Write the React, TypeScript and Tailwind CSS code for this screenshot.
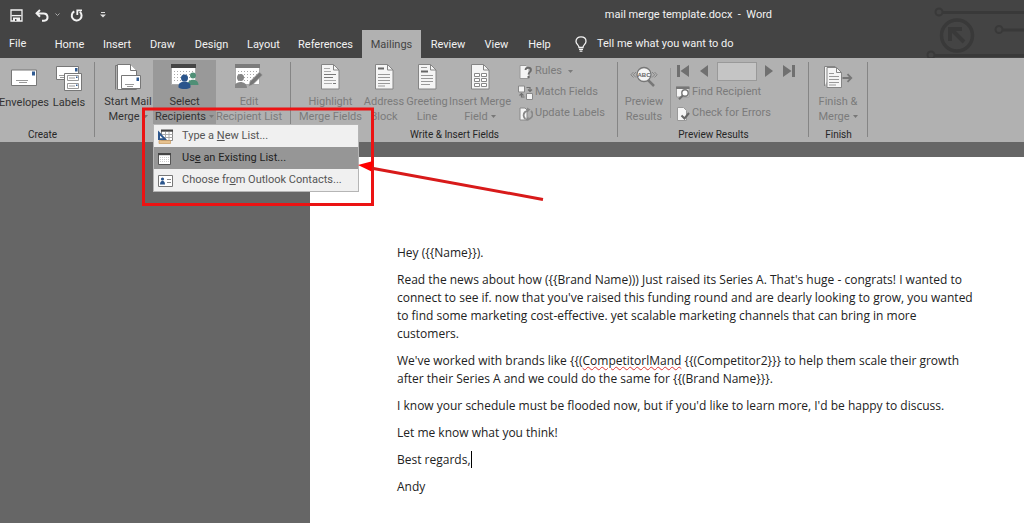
import React from 'react';

type IconProps = { className?: string };

const SaveIcon = () => (
  <svg width="13" height="13" viewBox="0 0 13 13" fill="none" stroke="#f2f2f2" strokeWidth="1.3">
    <path d="M1 1h11v11H1z" />
    <path d="M1.5 6.6h10" />
    <path d="M3 8.5h7V12H3z" fill="#f2f2f2" stroke="none" />
    <path d="M5 10h1.4v2H5z" fill="#444" stroke="none" />
  </svg>
);

const UndoIcon = () => (
  <svg width="14" height="13" viewBox="0 0 14 13" fill="none" stroke="#f2f2f2" strokeWidth="2">
    <path d="M5 1L1.6 4.3 5 7.8" />
    <path d="M2 4.4h6.5c5 0 5.500 6.800.6 7.400H7" />
  </svg>
);

const RedoIcon = () => (
  <svg width="13" height="13" viewBox="0 0 13 13" fill="none" stroke="#f2f2f2" strokeWidth="2">
    <path d="M4.300 2.300a4.900 4.900 0 1 0 5.500.5" />
    <path d="M7.300 6V1.300H12" strokeWidth="1.800" />
  </svg>
);

const Caret = ({ className = '' }: IconProps) => (
  <svg className={className} width="5" height="3" viewBox="0 0 5 3" fill="currentColor">
    <path d="M0 0h5L2.500 3z" />
  </svg>
);

const EnvelopeIcon = () => (
  <svg width="26" height="18" viewBox="0 0 26 18">
    <path d="M.5 1h25v15.500H.5z" fill="#fff" stroke="#777" />
    <path d="M21 2.500h3v4h-3z" fill="#2f5a92" />
    <path d="M5 11.500h12M8 13.500h8" stroke="#999" />
  </svg>
);

const LabelsIcon = () => (
  <svg width="26" height="26" viewBox="0 0 26 26">
    <path d="M.5 1.500h22v13H.5z" fill="#fff" stroke="#777" />
    <path d="M19 3h2.500v3.500H19z" fill="#2f5a92" />
    <path d="M3 10.500h6M4 12.500h4" stroke="#999" />
    <path d="M8.500 8.500h17v17h-17z" fill="#fff" stroke="#777" />
    <path d="M11.500 10.500h11v5h-11zM11.500 18.500h11v5h-11z" fill="#fff" stroke="#999" />
    <path d="M13 13h6M13 21h6" stroke="#999" />
    <path d="M20 11.500h1.500V13H20zM20 19.500h1.500V21H20z" fill="#2f5a92" />
  </svg>
);

const MergeIcon = () => (
  <svg width="26" height="27" viewBox="0 0 26 27">
    <path d="M.5 25.500V1.500h4" fill="none" stroke="#777" />
    <path d="M2.500.5h13l6 6v19h-19z" fill="#fff" stroke="#777" />
    <path d="M15.500.5v6h6" fill="#fff" stroke="#777" />
    <path d="M6.500 11.500h19v13h-19z" fill="#fff" stroke="#777" />
    <path d="M21.500 13.500H24V17h-2.500z" fill="#2f5a92" />
    <path d="M10 20.500h9M12 22.500h6" stroke="#999" />
  </svg>
);

const ListGrid = () => (
  <>
    <path d="M.5.5h24v20H.5z" fill="#fff" stroke="#aaa" />
    <path d="M3 7.500h19M3 10.500h19M3 13.500h19M3 16.500h19" stroke="#aaa" strokeDasharray="1 2" />
  </>
);

const RecipientsIcon = () => (
  <svg width="28" height="26" viewBox="0 0 28 26">
    <ListGrid />
    <path d="M0 0h25v4H0z" fill="#454545" />
    <circle cx="22" cy="11.500" r="3" fill="#4f8f76" />
    <path d="M16.500 21c0-7 11-7 11 0z" fill="#4f8f76" />
    <circle cx="13.500" cy="14" r="3.500" fill="#2b558c" />
    <path d="M7.500 22c0-6 12-6 12 0v1.500c-3 2-9 2-12 0z" fill="#2b558c" />
  </svg>
);

const EditListIcon = () => (
  <svg width="28" height="26" viewBox="0 0 28 26">
    <ListGrid />
    <path d="M0 0h25v4H0z" fill="#7c7c7c" />
    <circle cx="5.500" cy="13.500" r="3.500" fill="#858585" />
    <path d="M-1 24c0-8 13-8 13 0z" fill="#858585" />
    <path d="M13.500 22.500l1.500-5L24.500 8l3 3L18 20.500z" fill="#777" stroke="#b1b1b1" strokeWidth=".6" />
  </svg>
);

const HighlightIcon = () => (
  <svg width="19" height="26" viewBox="0 0 19 26">
    <path d="M.5.500h12l5.500 5.500v19H.5z" fill="#f5f5f5" stroke="#858585" />
    <path d="M12.500.500V6H18" fill="none" stroke="#858585" />
    <path d="M3 4.500h6M3 7.500h7M3 16.500h12M3 19.500h8" stroke="#aaa" />
    <path d="M3 10.500h12M3 13.500h9M12 19.500h3" stroke="#777" />
  </svg>
);

const AddressIcon = () => (
  <svg width="19" height="26" viewBox="0 0 19 26">
    <path d="M.5.500h12l5.500 5.500v19H.5z" fill="#f5f5f5" stroke="#858585" />
    <path d="M12.500.500V6H18" fill="none" stroke="#858585" />
    <path d="M3 3.500h6v2H3z" fill="#666" />
    <path d="M3 10.500h12M3 13.500h12M3 16.500h12M3 19.500h12M3 22h7" stroke="#999" />
  </svg>
);

const GreetingIcon = () => (
  <svg width="19" height="26" viewBox="0 0 19 26">
    <path d="M.5.500h12l5.500 5.500v19H.5z" fill="#f5f5f5" stroke="#858585" />
    <path d="M12.500.500V6H18" fill="none" stroke="#858585" />
    <path d="M3 6.500h7v2H3z" fill="#666" />
    <path d="M3 3.500h6M3 11.500h12M3 14.500h12M3 17.500h12M3 20.500h9" stroke="#999" />
  </svg>
);

const InsertFieldIcon = () => (
  <svg width="19" height="26" viewBox="0 0 19 26">
    <path d="M.5.500h12l5.500 5.500v19H.5z" fill="#f5f5f5" stroke="#858585" />
    <path d="M12.500.500V6H18" fill="none" stroke="#858585" />
    <path d="M3.500 9.500h5v3h-5zM10.500 9.500h5v3h-5zM3.500 14.500h5v3h-5zM10.500 14.500h5v3h-5zM3.500 19.500h5v3h-5zM10.500 19.500h5v3h-5z" fill="#fff" stroke="#888" />
  </svg>
);

const RulesIcon = () => (
  <svg width="14" height="14" viewBox="0 0 14 14">
    <path d="M1 .500h6l3 3v10H1z" fill="#f5f5f5" stroke="#999" />
    <path d="M6.500 5c.2-3 5.500-3 5.500 0 0 2.200-2.500 2-2.500 4.500" fill="none" stroke="#6a6a6a" strokeWidth="1.800" />
    <path d="M8.500 11h2v2h-2z" fill="#6a6a6a" />
  </svg>
);

const MatchIcon = () => (
  <svg width="15" height="15" viewBox="0 0 15 15">
    <path d="M.5 1h6v6h-6zM8.500 8.500h6v6h-6z" fill="#f5f5f5" stroke="#888" />
    <path d="M8.500 2.500H12V6M10 4.500l2 2 2-2M6.500 12H3.500V9M1.500 10.500l2-2 2 2" fill="none" stroke="#707070" strokeWidth="1.200" />
  </svg>
);

const UpdateIcon = () => (
  <svg width="14" height="14" viewBox="0 0 14 14">
    <path d="M1 1h5l2 2v10H1z" fill="#f5f5f5" stroke="#888" />
    <path d="M6.500 12a4.600 4.600 0 0 1-.5-7l3-1.500M12 4a4.600 4.600 0 0 1-1 7.500l-3 1.500" fill="none" stroke="#888" strokeWidth="1.800" />
    <path d="M8 .500v5l3.500-3zM9.500 9.500v4L6 13z" fill="#888" />
  </svg>
);

const PreviewIcon = () => (
  <svg width="28" height="22" viewBox="0 0 28 22">
    <path d="M3.500 6L.8 8.800l2.700 2.700M6 6L3.300 8.800 6 11.500M22 6l2.700 2.800L22 11.500M24.500 6l2.700 2.800-2.700 2.700" fill="none" stroke="#858585" />
    <path d="M18 14l6 6" stroke="#777" strokeWidth="2.500" />
    <circle cx="14" cy="8.500" r="7" fill="#f5f5f5" stroke="#777" strokeWidth="1.300" />
    <text x="14" y="11" textAnchor="middle" fontSize="6" fontWeight="700" fill="#666" fontFamily="Liberation Sans">ABC</text>
  </svg>
);

const FindIcon = () => (
  <svg width="14" height="14" viewBox="0 0 14 14">
    <path d="M.5 1h12.500v10H.5z" fill="#f5f5f5" stroke="#999" />
    <path d="M0 .500h13.500v2.500H0z" fill="#777" />
    <circle cx="9" cy="7" r="3.200" fill="#fff" stroke="#777" strokeWidth="1.400" />
    <path d="M6.800 9.500L3 13.300" stroke="#6f6f6f" strokeWidth="2" />
  </svg>
);

const CheckIcon = () => (
  <svg width="14" height="14" viewBox="0 0 14 14">
    <path d="M1.500.500h6l3 3v10h-9z" fill="#f5f5f5" stroke="#999" />
    <path d="M5.500 8.500l3 3L13 6" fill="none" stroke="#666" strokeWidth="2" />
  </svg>
);

const FinishIcon = () => (
  <svg width="29" height="23" viewBox="0 0 29 23">
    <path d="M.5 20V.500h11" fill="#f5f5f5" stroke="#858585" />
    <path d="M3 1.500h9.500l5 5v15H3z" fill="#f5f5f5" stroke="#858585" />
    <path d="M12.500 1.500v5h5" fill="none" stroke="#858585" />
    <path d="M5 7.500h5M5 10.500h10M5 13.500h10M5 16.500h10M5 19h7" stroke="#999" />
    <path d="M18.500 12h8M23.500 8.200l3.800 3.800-3.800 3.800" fill="none" stroke="#777" strokeWidth="1.800" />
  </svg>
);

const NewListIcon = () => (
  <svg width="15" height="15" viewBox="0 0 15 15">
    <path d="M3.500 1.500h11v10h-11z" fill="#fff" stroke="#888" />
    <path d="M3.500 5.500h11M3.500 8.500h11M7.500 3v8M11 3v8" stroke="#aaa" />
    <path d="M3 .500h12v2.200H3z" fill="#444" />
    <path d="M0 1.500V11h9z" fill="#2b558c" />
    <path d="M2 6.500v2.800h2.800z" fill="#fff" />
    <path d="M1 11.500h11.500v3H1z" fill="#e7c28f" stroke="#c99a5e" strokeWidth=".7" />
  </svg>
);

const ExistingListIcon = () => (
  <svg width="13" height="12" viewBox="0 0 13 12">
    <path d="M.5.500h12v11H.5z" fill="#fff" stroke="#555" />
    <path d="M0 0h13v2.200H0z" fill="#444" />
    <path d="M2 4.500h9M2 6.500h9M2 8.500h9" stroke="#ccc" strokeDasharray="1 1" />
  </svg>
);

const ContactIcon = () => (
  <svg width="15" height="12" viewBox="0 0 15 12">
    <path d="M.5.500h14v11H.5z" fill="#fff" stroke="#777" />
    <circle cx="4.500" cy="4" r="1.600" fill="#2b558c" />
    <path d="M2 9.500c0-5 5-5 5 0z" fill="#2b558c" />
    <path d="M9 4.500h4M9 7.500h4" stroke="#888" />
  </svg>
);

const BulbIcon = () => (
  <svg width="12" height="16" viewBox="0 0 12 16" fill="none" stroke="#f2f2f2" strokeWidth="1.300">
    <path d="M4 11.500C4 8.800 1 8.300 1 5.200 1 2.400 3.200.800 6 .800s5 1.600 5 4.400c0 3.100-3 3.600-3 6.300z" />
    <path d="M4 13.300h4M4.600 15.200h2.800" />
  </svg>
);

const CircuitArt = () => (
  <svg className="absolute right-0 top-0" width="120" height="58" viewBox="0 0 120 58" fill="none" stroke="#393939" strokeWidth="2">
    <circle cx="35" cy="12" r="3.500" />
    <path d="M39 12.500h81" strokeWidth="3" />
    <circle cx="95" cy="29.500" r="3.500" />
    <path d="M99 30h21" strokeWidth="3" />
    <circle cx="27" cy="55" r="3.500" />
    <path d="M31 55.500h89" strokeWidth="3" />
    <circle cx="53" cy="35.500" r="15.500" strokeWidth="3.500" />
    <path d="M60 42L48 30M46 41V29h12" strokeWidth="4" />
  </svg>
);

const tabs = [
  ['Home', 'w-[49px]'],
  ['Insert', 'w-[46px]'],
  ['Draw', 'w-[45px]'],
  ['Design', 'w-[53px]'],
  ['Layout', 'w-[51px]'],
  ['References', 'w-[73px]'],
  ['Mailings', 'w-[59px]'],
  ['Review', 'w-[54px]'],
  ['View', 'w-[43px]'],
  ['Help', 'w-[43px]'],
];

type BigProps = {
  icon: React.ReactNode;
  lines: string[];
  width: string;
  disabled?: boolean;
  active?: boolean;
  menu?: boolean;
};

const BigButton = ({ icon, lines, width, disabled, active, menu }: BigProps) => (
  <button
    type="button"
    disabled={disabled}
    className={`flex h-16 shrink-0 flex-col items-center whitespace-nowrap leading-[15px] ${width} ${disabled ? 'text-[#7b7b7b]' : 'text-[#333]'} ${active ? 'bg-[#999]' : ''}`}
  >
    <span className="flex h-[35px] items-center justify-center">{icon}</span>
    {lines.map((line, i) => (
      <span key={line} className="flex h-[15px] items-center gap-[3px]">
        {line}
        {menu && i === lines.length - 1 && <Caret className="text-[#777]" />}
      </span>
    ))}
  </button>
);

const SmallButton = ({ icon, label, menu }: { icon: React.ReactNode; label: string; menu?: boolean }) => (
  <button type="button" disabled className="flex h-[21px] items-center gap-[2px] whitespace-nowrap text-[#7b7b7b]">
    <span className="flex w-[15px] justify-center">{icon}</span>
    {label}
    {menu && <Caret className="ml-1" />}
  </button>
);

const Group = ({ label, width, children }: { label?: string; width: string; children: React.ReactNode }) => (
  <section className={`relative flex h-[84px] shrink-0 flex-col pt-[2px] ${width}`}>
    <div className="flex h-[67px]">{children}</div>
    {label && <h2 className="text-center text-[10px] leading-[15px] text-[#262626]">{label}</h2>}
    <span className="absolute right-0 top-1 h-[75px] w-px bg-[#858585]" />
  </section>
);

const Nav = ({ label, path }: { label: string; path: string }) => (
  <button type="button" disabled aria-label={label}>
    <svg width="13" height="12" viewBox="0 0 13 12" fill="#707070">
      <path d={path} />
    </svg>
  </button>
);

const menuItem = 'flex h-[22px] w-full items-center whitespace-nowrap pt-px text-left';

const letter = {
  greeting: 'Hey ({{Name}}).',
  intro:
    "Read the news about how ({{Brand Name))) Just raised its Series A. That's huge - congrats! I wanted to connect to see if. now that you've raised this funding round and are dearly looking to grow, you wanted to find some marketing cost-effective. yet scalable marketing channels that can bring in more customers.",
  brandsBefore: "We've worked with brands like {{(",
  brandsMisspelt: 'CompetitorlMand',
  brandsAfter:
    ' {{(Competitor2}}} to help them scale their growth after their Series A and we could do the same for {{(Brand Name}}}.',
  closing: "I know your schedule must be flooded now, but if you'd like to learn more, I'd be happy to discuss.",
};

export default function App() {
  return (
    <div className="relative flex min-h-screen flex-col overflow-hidden bg-[#666] font-[Roboto,sans-serif] text-[11px]">
      <header className="relative bg-[#444] text-[#f2f2f2]">
        <CircuitArt />
        <div className="relative flex h-[30px] items-center pl-[10px]">
          <button type="button" aria-label="Save"><SaveIcon /></button>
          <button type="button" aria-label="Undo" className="ml-3"><UndoIcon /></button>
          <button type="button" aria-label="Undo history" className="ml-[6px]">
            <svg width="5" height="4" viewBox="0 0 5 4" fill="none" stroke="#aaa"><path d="M.5.500l2 2 2-2" /></svg>
          </button>
          <button type="button" aria-label="Repeat" className="ml-[10px]"><RedoIcon /></button>
          <button type="button" aria-label="Customize toolbar" className="ml-[17px]">
            <svg width="6" height="6" viewBox="0 0 6 6" fill="#ddd"><path d="M1 0h4v1H1zM0 2.500h6l-3 3z" /></svg>
          </button>
          <h1 className="ml-auto mr-[252px] whitespace-pre">mail merge template.docx  -  Word</h1>
        </div>
        <nav className="relative flex h-7 items-stretch">
          <button type="button" className="w-[45px] pl-[9px] text-left">File</button>
          {tabs.map(([name, width]) => (
            <button
              key={name}
              type="button"
              className={`pt-[2px] ${width} ${name === 'Mailings' ? 'bg-[#b1b1b1] text-[#444]' : ''}`}
            >
              {name}
            </button>
          ))}
          <button type="button" className="ml-[14px] flex items-center gap-[10px]">
            <BulbIcon />
            Tell me what you want to do
          </button>
        </nav>
      </header>

      <div className="flex h-[84px] bg-[#b1b1b1]">
        <Group label="Create" width="w-[95px] pr-[10px]">
          <BigButton icon={<EnvelopeIcon />} lines={['Envelopes']} width="w-12" />
          <BigButton icon={<LabelsIcon />} lines={['Labels']} width="w-[42px]" />
        </Group>
        <Group width="w-[196px]">
          <div className="ml-2 flex">
            <BigButton icon={<MergeIcon />} lines={['Start Mail', 'Merge']} width="w-[50px]" menu />
            <div className="relative">
              <BigButton icon={<RecipientsIcon />} lines={['Select', 'Recipients']} width="w-[63px]" active menu />
              <div className="absolute left-0 top-16 z-10 w-[206px] border border-[#b5b5b5] bg-[#f0f0f0]">
                <button type="button" className={`${menuItem} text-[#555]`}>
                  <span className="flex w-7 pl-1"><NewListIcon /></span>
                  <span>Type a <u>N</u>ew List...</span>
                </button>
                <button type="button" className={`${menuItem} bg-[#969696] text-[#222]`}>
                  <span className="flex w-7 pl-1"><ExistingListIcon /></span>
                  <span>Us<u>e</u> an Existing List...</span>
                </button>
                <button type="button" className={`${menuItem} text-[#555]`}>
                  <span className="flex w-7 pl-1"><ContactIcon /></span>
                  <span>Choose fr<u>o</u>m Outlook Contacts...</span>
                </button>
              </div>
            </div>
            <BigButton icon={<EditListIcon />} lines={['Edit', 'Recipient List']} width="w-[66px]" disabled />
          </div>
        </Group>
        <Group label="Write &amp; Insert Fields" width="w-[327px]">
          <BigButton icon={<HighlightIcon />} lines={['Highlight', 'Merge Fields']} width="w-[79px]" disabled />
          <BigButton icon={<AddressIcon />} lines={['Address', 'Block']} width="w-7 mr-[14px]" disabled />
          <BigButton icon={<GreetingIcon />} lines={['Greeting', 'Line']} width="w-[30px]" disabled />
          <BigButton icon={<InsertFieldIcon />} lines={['Insert Merge', 'Field']} width="w-[76px]" disabled menu />
          <div className="flex flex-col pt-px">
            <SmallButton icon={<RulesIcon />} label="Rules" menu />
            <SmallButton icon={<MatchIcon />} label="Match Fields" />
            <SmallButton icon={<UpdateIcon />} label="Update Labels" />
          </div>
        </Group>
        <Group label="Preview Results" width="w-[191px]">
          <BigButton icon={<PreviewIcon />} lines={['Preview', 'Results']} width="w-[52px]" disabled />
          <span className="mt-2 h-[50px] w-px bg-[#999]" />
          <div className="ml-1 flex flex-col">
            <div className="flex h-[22px] items-center pl-[2px]">
              <Nav label="First record" path="M0 0h3v12H0zM12 0v12L3.500 6z" />
              <span className="ml-2 flex"><Nav label="Previous record" path="M10 0v12L2 6z" /></span>
              <input aria-label="Record" disabled className="ml-[6px] h-[19px] w-10 border border-[#999] bg-[#c5c5c5]" />
              <span className="ml-[5px] flex"><Nav label="Next record" path="M3 0v12l8-6z" /></span>
              <span className="ml-[7px] flex"><Nav label="Last record" path="M13 0h-3v12h3zM1 0v12l8.500-6z" /></span>
            </div>
            <SmallButton icon={<FindIcon />} label="Find Recipient" />
            <SmallButton icon={<CheckIcon />} label="Check for Errors" />
          </div>
        </Group>
        <Group label="Finish" width="w-[59px]">
          <BigButton icon={<FinishIcon />} lines={['Finish &', 'Merge']} width="w-[58px]" disabled menu />
        </Group>
      </div>

      <main className="mt-[15px] flex grow flex-col pl-[310px]">
        <article className="flex grow flex-col gap-[9px] bg-white pb-7 pl-[87px] pr-12 pt-[87px] font-['Open_Sans',sans-serif] text-[12px] leading-[18px] text-[#222]">
          <p>{letter.greeting}</p>
          <p>{letter.intro}</p>
          <p>
            {letter.brandsBefore}
            <span className="underline decoration-[#d33] decoration-wavy decoration-1">{letter.brandsMisspelt}</span>
            {letter.brandsAfter}
          </p>
          <p>{letter.closing}</p>
          <p>Let me know what you think!</p>
          <p>Best regards,<span className="border-l border-black" /></p>
          <p>Andy</p>
        </article>
      </main>

      <svg className="pointer-events-none absolute left-0 top-0 z-20" width="560" height="220" viewBox="0 0 560 220">
        <path d="M143.500 109h229v95.500h-229z" fill="none" stroke="#ec1313" strokeWidth="3" />
        <path d="M368 167.500L543 199.500" stroke="#d81a1a" strokeWidth="3" />
        <path d="M358 165l15-4-1.500 10.500z" fill="#f00" />
      </svg>
    </div>
  );
}
